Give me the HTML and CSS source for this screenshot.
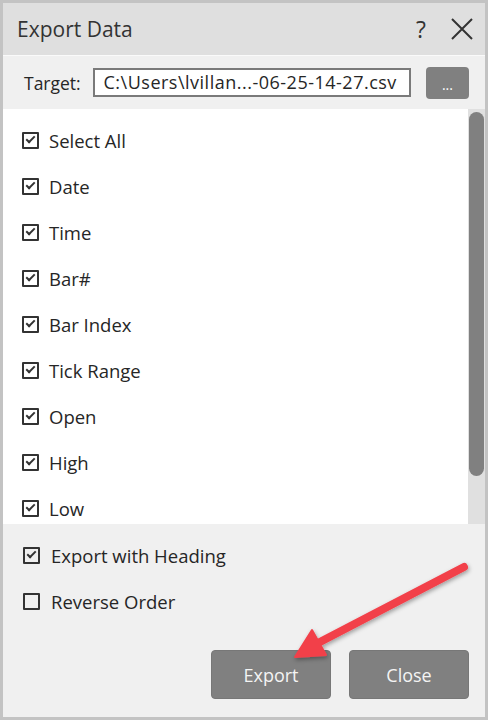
FILE: index.html
```html
<!DOCTYPE html>
<html lang="en">
<head>
    <meta charset="UTF-8">
    <title>Export Data</title>
    <link rel="stylesheet" href="styles.css">
</head>
<body>
    <div class="dialog">
        <div class="titlebar">
            <span class="title">Export Data</span>
            <span class="help">?</span>
            <svg class="close-x" width="22" height="22" viewBox="0 0 22 22">
                <path d="M1 1 L21 21 M21 1 L1 21" stroke="#333" stroke-width="2" fill="none"/>
            </svg>
        </div>

        <div class="target-row">
            <span class="target-label">Target:</span>
            <div class="target-input">C:\Users\lvillan...-06-25-14-27.csv</div>
            <button class="browse">...</button>
        </div>

        <div class="list">
            <div class="list-items">
                <div class="item"><span class="box checked"></span><span>Select All</span></div>
                <div class="item"><span class="box checked"></span><span>Date</span></div>
                <div class="item"><span class="box checked"></span><span>Time</span></div>
                <div class="item"><span class="box checked"></span><span>Bar#</span></div>
                <div class="item"><span class="box checked"></span><span>Bar Index</span></div>
                <div class="item"><span class="box checked"></span><span>Tick Range</span></div>
                <div class="item"><span class="box checked"></span><span>Open</span></div>
                <div class="item"><span class="box checked"></span><span>High</span></div>
                <div class="item"><span class="box checked"></span><span>Low</span></div>
            </div>
            <div class="scrollbar">
                <div class="thumb"></div>
            </div>
        </div>

        <div class="options">
            <div class="item"><span class="box checked"></span><span>Export with Heading</span></div>
            <div class="item"><span class="box"></span><span>Reverse Order</span></div>
        </div>

        <div class="actions">
            <button class="action">Export</button>
            <button class="action">Close</button>
        </div>

        <!-- annotation arrow over the dialog -->
        <svg class="arrow" width="488" height="720" viewBox="0 0 488 720">
            <defs>
                <filter id="shadow" x="-20%" y="-20%" width="140%" height="140%">
                    <feDropShadow dx="1" dy="2" stdDeviation="2" flood-color="#000" flood-opacity="0.35"/>
                </filter>
            </defs>
            <g filter="url(#shadow)" fill="#f2404a" stroke="#f2404a">
                <line x1="464" y1="567" x2="318" y2="643" stroke-width="8" stroke-linecap="round"/>
                <polygon points="295,657 312,630 326,655" stroke-width="2" stroke-linejoin="round"/>
            </g>
        </svg>
    </div>
</body>
</html>
```

FILE: styles.css
```css
body {
    margin: 0;
    padding: 0;
    font-family: "Open Sans", "Noto Sans", sans-serif;
    color: #262626;
}

.dialog {
    position: relative;
    width: 488px;
    height: 720px;
    box-sizing: border-box;
    border: 3px solid #c3c3c3;
    background-color: #f0f0f0;
    display: flex;
    flex-direction: column;
}

.titlebar {
    height: 52px;
    background-color: #dfdfdf;
    border-bottom: 1px solid #fafafa;
    display: flex;
    align-items: center;
    padding: 0 12px 0 14px;
}

.title {
    flex: 1;
    font-size: 21px;
    color: #333;
}

.help {
    font-size: 23px;
    color: #333;
    margin-right: 25px;
}

.target-row {
    height: 53px;
    display: flex;
    align-items: center;
    padding: 0 16px 0 21px;
}

.target-label {
    font-size: 17.5px;
    width: 70px;
}

.target-input {
    width: 312px;
    height: 25px;
    border: 2px solid #7a7a7a;
    background-color: #fff;
    font-size: 18px;
    letter-spacing: 0.5px;
    line-height: 25px;
    padding-left: 9px;
    box-sizing: content-box;
    margin-right: 15px;
    white-space: nowrap;
    overflow: hidden;
}

.browse {
    width: 44px;
    height: 32px;
    border: none;
    border-radius: 4px;
    background-color: #808080;
    color: #fff;
    font-family: inherit;
    font-size: 14px;
    padding: 4px 0 0 0;
}

.list {
    height: 415px;
    display: flex;
    background-color: #fff;
}

.list-items {
    flex: 1;
    padding: 8px 0 0 19px;
    overflow: hidden;
}

.item {
    height: 46px;
    display: flex;
    align-items: center;
    font-size: 18.5px;
    white-space: nowrap;
}

.box {
    flex: none;
    width: 13px;
    height: 13px;
    border: 2px solid #333;
    border-radius: 1px;
    margin-right: 10px;
    position: relative;
}

.box.checked::after {
    content: "";
    position: absolute;
    left: 2px;
    top: 2px;
    width: 7px;
    height: 3px;
    border-left: 2px solid #333;
    border-bottom: 2px solid #333;
    transform: rotate(-45deg);
}

.scrollbar {
    width: 17px;
    background-color: #e0e0e0;
    padding-top: 3px;
}

.thumb {
    width: 15px;
    height: 364px;
    margin-left: 1px;
    border-radius: 8px;
    background-color: #808080;
}

.options {
    padding: 8px 0 0 20px;
}

.options .box {
    margin-right: 11px;
}

.actions {
    display: flex;
    justify-content: flex-end;
    gap: 18px;
    padding: 26px 16px 0 0;
}

.action {
    width: 120px;
    height: 49px;
    border: 1px solid #777;
    border-radius: 4px;
    background-color: #808080;
    color: #f4f4f4;
    font-family: inherit;
    font-size: 18px;
}

.arrow {
    position: absolute;
    left: -3px;
    top: -3px;
    pointer-events: none;
}
```
